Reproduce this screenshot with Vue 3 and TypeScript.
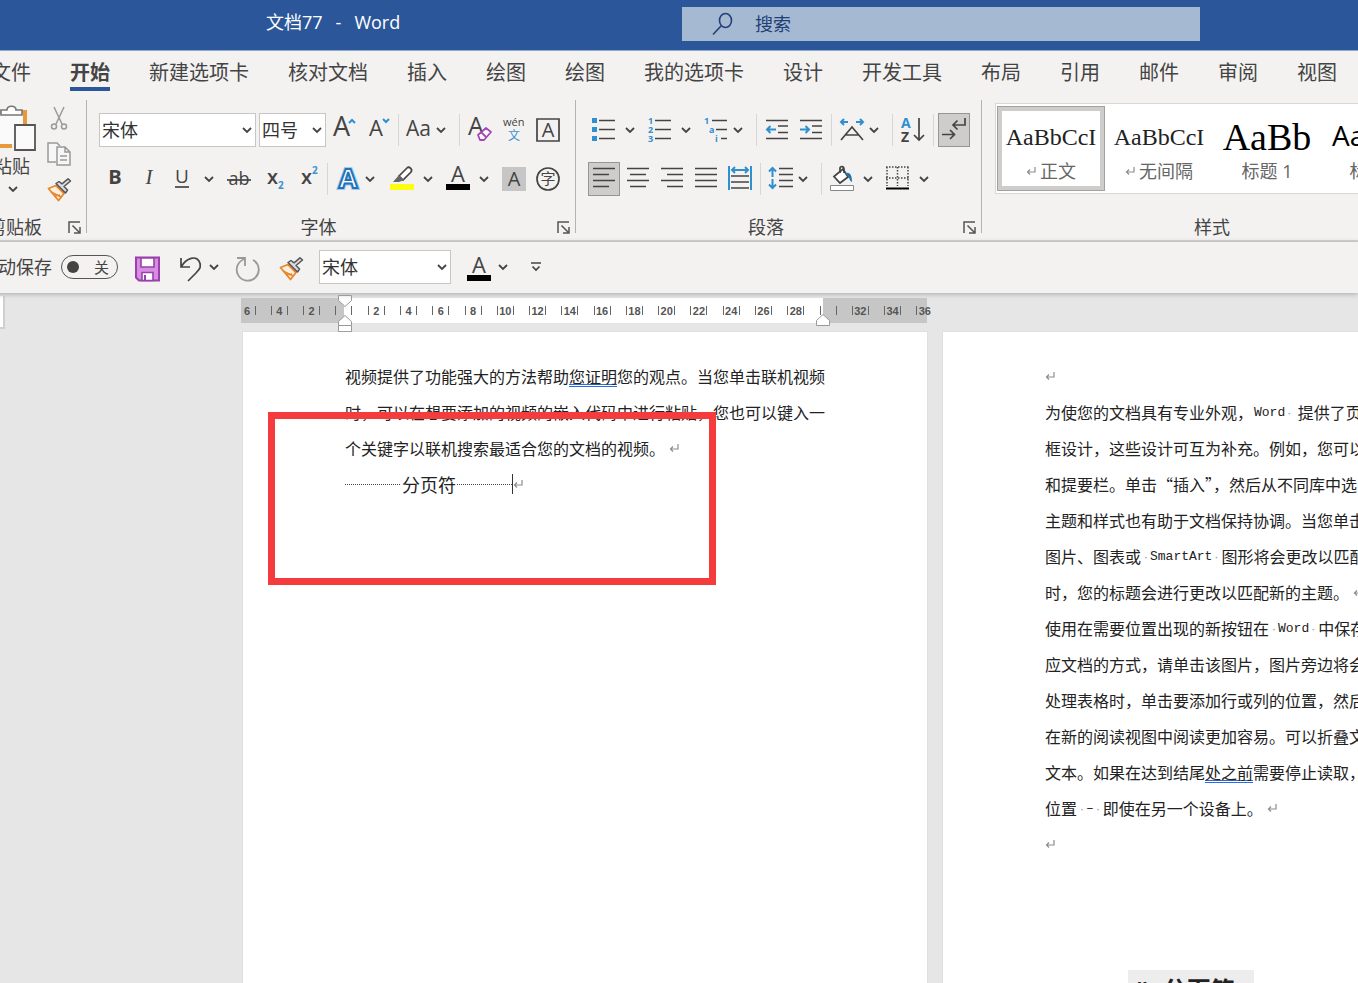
<script setup lang="ts">
import { h, ref } from 'vue'

const tabs: string[] = ['文件', '开始', '新建选项卡', '核对文档', '插入', '绘图', '绘图', '我的选项卡', '设计', '开发工具', '布局', '引用', '邮件', '审阅', '视图']
const activeTab = ref(1)

const fontName = ref('宋体')
const fontSize = ref('四号')
const query = ref('')
const autoSave = ref(false)

interface RulerMark { label: string }
const rulerMarks: RulerMark[] = Array.from({ length: 22 }, (_, i) => {
  const value = Math.abs(i * 2 - 6)
  return { label: value === 0 || value === 30 ? '' : String(value) }
})

interface StyleItem { sample: string; name: string; kind: string; mark: boolean }
const styleItems: StyleItem[] = [
  { sample: 'AaBbCcI', name: '正文', kind: 'body', mark: true },
  { sample: 'AaBbCcI', name: '无间隔', kind: 'body', mark: true },
  { sample: 'AaBb', name: '标题 1', kind: 'heading', mark: false },
  { sample: 'AaBbC', name: '标题 2', kind: 'sub', mark: false },
]

const Chevron = () =>
  h('svg', { width: 10, height: 10, viewBox: '0 0 10 10', fill: 'none', stroke: '#444', 'stroke-width': 1.8 }, [h('path', { d: 'M1 3l4 4 4-4' })])

const Launcher = () =>
  h('svg', { width: 13, height: 13, viewBox: '0 0 13 13', fill: 'none', stroke: '#555', 'stroke-width': 1.5 }, [
    h('path', { d: 'M1 12V1h11M4.500 4.500l7 7M12 6v6H6' }),
  ])

const Brush = () =>
  h('svg', { width: 24, height: 24, viewBox: '0 0 24 24', fill: 'none' }, [
    h('path', { d: 'M1.500 10.500L9 7.500l8 8-5.500 7z', fill: '#fdeede', stroke: '#e8862a', 'stroke-width': 1.8, 'stroke-linejoin': 'round' }),
    h('path', { d: 'M4 14l10 5M7 18l6-1', stroke: '#e8862a', 'stroke-width': 1.6 }),
    h('path', { d: 'M9 5.500l9.500 9.500 2-3-3.500-3.500L23.500 3 21 .800l-6 5L12 3.500z', fill: '#d9dde2', stroke: '#555', 'stroke-width': 1.5, 'stroke-linejoin': 'round' }),
  ])

const ReturnMark = () =>
  h('svg', { width: 10, height: 10, viewBox: '0 0 10 10', fill: 'none', stroke: '#8c8c8c', 'stroke-width': 1.2 }, [
    h('path', { d: 'M9 1v5H1.500M4 3.500L1.500 6 4 8.500' }),
  ])
</script>

<template>
  <div class="word" lang="zh-CN">
    <header class="title-bar">
      <h1 class="doc-title"><span>文档77</span><span>-</span><span>Word</span></h1>
      <label class="search">
        <svg width="24" height="24" viewBox="0 0 24 24" fill="none" stroke="#1f3f77" stroke-width="1.6"><ellipse cx="14.500" cy="8.500" rx="6" ry="7" /><path d="M10 14l-8 8.500" /></svg>
        <input v-model="query" type="text" placeholder="搜索" aria-label="搜索" />
      </label>
    </header>

    <nav class="tabs">
      <button v-for="(tab, i) in tabs" :key="i" type="button" :class="['tab', { active: i === activeTab }]" @click="activeTab = i">{{ tab }}</button>
    </nav>

    <div class="ribbon">
      <section class="group clipboard">
        <div class="clip-tools">
          <button type="button" class="paste">
            <svg width="40" height="48" viewBox="0 0 40 48" fill="none">
              <path d="M2 8h28v14M2 42h15" stroke="#e8993a" stroke-width="4" />
              <path d="M2 10h26v30H2z" fill="#fafafa" />
              <path d="M6 11V6h6c0-5 9-5 9 0h6v5z" fill="#fff" stroke="#777" stroke-width="1.600" />
              <path d="M20 21h20v25H20z" fill="#fafafa" stroke="#555" stroke-width="1.800" />
            </svg>
            <span>粘贴</span>
            <Chevron />
          </button>
          <div class="clip-side">
            <button type="button" class="tool" aria-label="剪切">
              <svg width="24" height="24" viewBox="0 0 24 24" fill="none" stroke="#999" stroke-width="1.500"><path d="M7 1l8 17M17 1L9 18" /><circle cx="7" cy="20.500" r="2.500" /><circle cx="17" cy="20.500" r="2.500" /></svg>
            </button>
            <button type="button" class="tool" aria-label="复制">
              <svg width="24" height="24" viewBox="0 0 24 24" fill="#f6f6f6" stroke="#999" stroke-width="1.500"><path d="M9 20H1V1h9l3 3" /><path d="M10 5h8l5 5v13H10zM18 5v5h5M13 14h7M13 18h7" /></svg>
            </button>
            <button type="button" class="tool" aria-label="格式刷"><Brush /></button>
          </div>
        </div>
        <footer class="group-foot"><span class="group-name">剪贴板</span><button type="button" class="tool launch" aria-label="剪贴板设置"><Launcher /></button></footer>
      </section>

      <section class="group font">
        <div class="tools">
          <div class="row font-row-1">
            <label class="combo combo-font"><select v-model="fontName" aria-label="字体"><option>宋体</option></select><Chevron /></label>
            <label class="combo combo-size"><select v-model="fontSize" aria-label="字号"><option>四号</option></select><Chevron /></label>
            <button type="button" class="tool" aria-label="增大字号"><svg width="24" height="24" viewBox="0 0 24 24"><text x="0" y="18" font-size="27" class="g">A</text><path d="M16 5l3-3 3 3" class="b2" /></svg></button>
            <button type="button" class="tool" aria-label="减小字号"><svg width="24" height="24" viewBox="0 0 24 24"><text x="1" y="18" font-size="22" class="g">A</text><path d="M15 1l3 3 3-3" class="b2" /></svg></button>
            <i class="rule"></i>
            <button type="button" class="tool" aria-label="更改大小写"><svg width="28" height="24" viewBox="0 0 28 24"><text x="0" y="18" font-size="21" class="g">Aa</text></svg></button>
            <button type="button" class="tool" aria-label="大小写选项"><Chevron /></button>
            <i class="rule"></i>
            <button type="button" class="tool" aria-label="清除格式"><svg width="24" height="24" viewBox="0 0 24 24"><text x="0" y="17" font-size="25" class="g">A</text><path d="M10 17l8-7 5 4-7 8h-4z" fill="#fff" stroke="#a347b5" stroke-width="1.800" stroke-linejoin="round" /><path d="M13 14l5 5" stroke="#a347b5" stroke-width="1.800" /></svg></button>
            <button type="button" class="tool" aria-label="拼音指南"><svg width="24" height="26" viewBox="0 0 24 26"><text x="0" y="9" font-size="11" class="g">wén</text><text x="5" y="23" font-size="12" fill="#3b93d0">文</text></svg></button>
            <button type="button" class="tool" aria-label="字符边框"><svg width="24" height="24" viewBox="0 0 24 24"><path d="M1 1h22v22H1z" class="k" /><text x="12" y="19" font-size="20" text-anchor="middle" class="g">A</text></svg></button>
          </div>
          <div class="row font-row-2">
            <button type="button" class="tool" aria-label="加粗"><svg width="24" height="24" viewBox="0 0 24 24"><text x="12" y="17" font-size="20" font-weight="700" text-anchor="middle" class="g">B</text></svg></button>
            <button type="button" class="tool" aria-label="倾斜"><svg width="24" height="24" viewBox="0 0 24 24"><text x="12" y="17" font-size="21" font-style="italic" text-anchor="middle" class="g serif">I</text></svg></button>
            <button type="button" class="tool" aria-label="下划线"><svg width="24" height="24" viewBox="0 0 24 24"><text x="12" y="16" font-size="19" text-anchor="middle" class="g">U</text><path d="M5 20h14" class="k" /></svg></button>
            <button type="button" class="tool" aria-label="下划线选项"><Chevron /></button>
            <button type="button" class="tool" aria-label="删除线"><svg width="24" height="24" viewBox="0 0 24 24"><text x="12" y="18" font-size="18" text-anchor="middle" class="g">ab</text><path d="M0 13h24" class="k" /></svg></button>
            <button type="button" class="tool" aria-label="下标"><svg width="24" height="24" viewBox="0 0 24 24"><text x="3" y="17" font-size="20" font-weight="600" class="g">x</text><text x="14" y="22" font-size="10" font-weight="700" fill="#3b93d0">2</text></svg></button>
            <button type="button" class="tool" aria-label="上标"><svg width="24" height="24" viewBox="0 0 24 24"><text x="3" y="17" font-size="20" font-weight="600" class="g">x</text><text x="14" y="7" font-size="10" font-weight="700" fill="#3b93d0">2</text></svg></button>
            <i class="rule"></i>
            <button type="button" class="tool" aria-label="文本效果"><svg width="24" height="24" viewBox="0 0 24 24"><g font-size="27" font-weight="700" text-anchor="middle"><text x="12" y="21" fill="#9ccbee" stroke="#9ccbee" stroke-width="4">A</text><text x="12" y="21" fill="#fff" stroke="#2272b8" stroke-width="2">A</text></g></svg></button>
            <button type="button" class="tool" aria-label="文本效果选项"><Chevron /></button>
            <button type="button" class="tool" aria-label="突出显示"><svg width="24" height="24" viewBox="0 0 24 24"><path d="M0 17h24v6H0z" fill="#fdfd12" /><path d="M9 9l8-8c2-2 6 1 4 4l-8 8z" fill="#fff" class="k" /><path d="M9 8l5 5-5 2H3z" fill="#666" /></svg></button>
            <button type="button" class="tool" aria-label="突出显示颜色"><Chevron /></button>
            <button type="button" class="tool" aria-label="字体颜色"><svg width="24" height="24" viewBox="0 0 24 24"><text x="12" y="15" font-size="22" text-anchor="middle" class="g">A</text><path d="M0 17h24v6H0z" /></svg></button>
            <button type="button" class="tool" aria-label="字体颜色选项"><Chevron /></button>
            <button type="button" class="tool" aria-label="字符底纹"><svg width="24" height="24" viewBox="0 0 24 24"><path d="M0 0h24v24H0z" fill="#c6c6c6" /><text x="12" y="19" font-size="20" text-anchor="middle" class="g">A</text></svg></button>
            <button type="button" class="tool" aria-label="带圈字符"><svg width="24" height="24" viewBox="0 0 24 24"><circle cx="12" cy="12" r="11" class="k" /><text x="12" y="17" font-size="15" text-anchor="middle" class="g">字</text></svg></button>
          </div>
        </div>
        <footer class="group-foot"><span class="group-name">字体</span><button type="button" class="tool launch" aria-label="字体设置"><Launcher /></button></footer>
      </section>

      <section class="group para">
        <div class="tools">
          <div class="row para-row-1">
            <button type="button" class="tool" aria-label="项目符号"><svg width="24" height="24" viewBox="0 0 24 24"><path d="M0 0h5v5H0zM0 9h5v5H0zM0 18h5v5H0z" fill="#2f8fcf" /><path d="M7 2.500h16M7 11.500h16M7 20.500h16" class="k" /></svg></button>
            <button type="button" class="tool" aria-label="项目符号选项"><Chevron /></button>
            <button type="button" class="tool" aria-label="编号"><svg width="24" height="24" viewBox="0 0 24 24"><g font-size="9" font-weight="700" fill="#2f8fcf"><text x="0" y="6">1</text><text x="0" y="15">2</text><text x="0" y="24">3</text></g><path d="M7 2.500h16M7 11.500h16M7 20.500h16" class="k" /></svg></button>
            <button type="button" class="tool" aria-label="编号选项"><Chevron /></button>
            <button type="button" class="tool" aria-label="多级列表"><svg width="24" height="24" viewBox="0 0 24 24"><g font-size="9" font-weight="700" fill="#2f8fcf"><text x="0" y="6">1</text><text x="5" y="15">a</text><text x="11" y="24">i</text></g><path d="M8 2.500h15M12 11.500h11M17 20.500h6" class="k" /></svg></button>
            <button type="button" class="tool" aria-label="多级列表选项"><Chevron /></button>
            <i class="rule"></i>
            <button type="button" class="tool" aria-label="减少缩进"><svg width="24" height="24" viewBox="0 0 24 24"><path d="M1 2.500h22M13 8h10M13 14.500h10M1 20.500h22" class="k" /><path d="M11 11.500H2M5.500 8L2 11.500 5.500 15" class="b2" /></svg></button>
            <button type="button" class="tool" aria-label="增加缩进"><svg width="24" height="24" viewBox="0 0 24 24"><path d="M1 2.500h22M13 8h10M13 14.500h10M1 20.500h22" class="k" /><path d="M1 11.500h9M6.500 8l3.500 3.500L6.500 15" class="b2" /></svg></button>
            <i class="rule"></i>
            <button type="button" class="tool" aria-label="中文版式"><svg width="24" height="24" viewBox="0 0 24 24"><path d="M8 4H1M4 1L1 4l3 3M16 4h7M20 1l3 3-3 3" class="b2" /><path d="M1 22L12 9l11 13M6 17h12" class="k" /></svg></button>
            <button type="button" class="tool" aria-label="中文版式选项"><Chevron /></button>
            <i class="rule"></i>
            <button type="button" class="tool" aria-label="排序"><svg width="25" height="24" viewBox="0 0 25 24"><text x="0" y="10" font-size="14" font-weight="700" fill="#2f8fcf">A</text><text x="0" y="24" font-size="14" font-weight="700" class="g">Z</text><path d="M18 0v22M13 17l5 5 5-5" class="k" /></svg></button>
            <i class="rule"></i>
            <button type="button" class="tool pressed" aria-label="显示编辑标记"><svg width="30" height="32" viewBox="0 0 30 32"><path d="M26 4v7H15M18.500 6.500L14 11l4.500 4.500M3 20.500h12M11 16l4.500 4.500L11 25" class="k" /></svg></button>
          </div>
          <div class="row para-row-2">
            <button type="button" class="tool pressed" aria-label="左对齐"><svg width="24" height="24" viewBox="0 0 24 24"><path d="M1 1.500h22M1 7.500h16M1 13.500h22M1 19.500h16" class="k" /></svg></button>
            <button type="button" class="tool" aria-label="居中"><svg width="24" height="24" viewBox="0 0 24 24"><path d="M1 1.500h22M4 7.500h16M1 13.500h22M4 19.500h16" class="k" /></svg></button>
            <button type="button" class="tool" aria-label="右对齐"><svg width="24" height="24" viewBox="0 0 24 24"><path d="M1 1.500h22M7 7.500h16M1 13.500h22M7 19.500h16" class="k" /></svg></button>
            <button type="button" class="tool" aria-label="两端对齐"><svg width="24" height="24" viewBox="0 0 24 24"><path d="M1 1.500h22M1 7.500h22M1 13.500h22M1 19.500h22" class="k" /></svg></button>
            <button type="button" class="tool" aria-label="分散对齐"><svg width="24" height="24" viewBox="0 0 24 24"><path d="M1 -1v24M23 -1v24M4 3h16M7 0L4 3l3 3M17 0l3 3-3 3" class="b2" /><path d="M3 9h18M3 15h18M3 21h18" class="k" /></svg></button>
            <i class="rule"></i>
            <button type="button" class="tool" aria-label="行距"><svg width="26" height="24" viewBox="0 0 26 24"><path d="M4.500 1v9M1 4.500L4.500 1 8 4.500M4.500 12v9M1 17.500L4.500 21 8 17.500" class="b2" /><path d="M11 1.500h14M11 7.500h14M11 13.500h14M11 19.500h14" class="k" /></svg></button>
            <button type="button" class="tool" aria-label="行距选项"><Chevron /></button>
            <i class="rule"></i>
            <button type="button" class="tool" aria-label="底纹"><svg width="24" height="24" viewBox="0 0 24 24"><path d="M4 9.500L13 2l5 8-8 6z" fill="#fff" stroke="#444" stroke-width="1.700" /><path d="M10 6V1c0-2 4-2 4 1v4" class="k" /><path d="M15 6c5-1 7 2 7 9-3-1-2-5-5-6z" fill="#2272a8" /><path d="M.500 18.500h23v5H.500z" fill="#fff" stroke="#888" /></svg></button>
            <button type="button" class="tool" aria-label="底纹颜色"><Chevron /></button>
            <button type="button" class="tool" aria-label="边框"><svg width="25" height="24" viewBox="0 0 25 24"><path d="M1 0h23M1 11h23M2 0v19M12.500 0v19M23 0v19" fill="none" stroke="#444" stroke-width="1.500" stroke-dasharray="1.500 1.500" /><path d="M1 21.500h23" stroke="#000" stroke-width="2" /></svg></button>
            <button type="button" class="tool" aria-label="边框选项"><Chevron /></button>
          </div>
        </div>
        <footer class="group-foot"><span class="group-name">段落</span><button type="button" class="tool launch" aria-label="段落设置"><Launcher /></button></footer>
      </section>

      <section class="group styles">
        <div class="gallery">
          <button v-for="(s, i) in styleItems" :key="i" type="button" :class="['style-item', { chosen: i === 0 }]">
            <span :class="['sample', s.kind]">{{ s.sample }}</span>
            <span class="style-name"><ReturnMark v-if="s.mark" />{{ s.name }}</span>
          </button>
        </div>
        <footer class="group-foot"><span class="group-name">样式</span></footer>
      </section>
    </div>

    <div class="quick-bar">
      <span class="auto-label" id="auto-save">自动保存</span>
      <button type="button" role="switch" :aria-checked="autoSave" aria-labelledby="auto-save" class="toggle" @click="autoSave = !autoSave"><i class="dot"></i><span>{{ autoSave ? '开' : '关' }}</span></button>
      <button type="button" class="tool low" aria-label="保存"><svg width="27" height="26" viewBox="0 0 27 26"><path d="M2 1.500h23v23H5l-3-3z" fill="#d78ee0" stroke="#9a3fae" stroke-width="2" /><path d="M7 2h13v9H7zM8 16.500h11v8H8z" fill="#fff" stroke="#9a3fae" stroke-width="1.600" /><path d="M11 19v5" stroke="#9a3fae" stroke-width="2" /></svg></button>
      <button type="button" class="tool low" aria-label="撤消"><svg width="24" height="26" viewBox="0 0 24 26"><path d="M2 2v9h9M2 11C8 1 17 0 20 5c3 5 1 8-3 12l-8 8" class="k" /></svg></button>
      <button type="button" class="tool" aria-label="撤消选项"><Chevron /></button>
      <button type="button" class="tool low" aria-label="重做"><svg width="26" height="26" viewBox="0 0 26 26" fill="none" stroke="#999" stroke-width="1.800"><path d="M2 2h8v8M10 3A11 11 0 1 0 18 4" /></svg></button>
      <button type="button" class="tool low" aria-label="格式刷"><Brush /></button>
      <label class="combo combo-quick"><select v-model="fontName" aria-label="快速字体"><option>宋体</option></select><Chevron /></label>
      <button type="button" class="tool low" aria-label="字体颜色"><svg width="24" height="26" viewBox="0 0 24 26"><text x="12" y="17" font-size="22" text-anchor="middle" class="g">A</text><path d="M0 19h24v6H0z" /></svg></button>
      <button type="button" class="tool" aria-label="字体颜色选项"><Chevron /></button>
      <button type="button" class="tool" aria-label="自定义快速访问工具栏"><svg width="12" height="12" viewBox="0 0 12 12" class="k"><path d="M1 2h10M2.500 5.500L6 9l3.500-3.500" /></svg></button>
    </div>

    <main class="workspace">
      <div class="tab-selector"></div>
      <div class="ruler">
        <div class="ruler-marks">
          <div v-for="(m, i) in rulerMarks" :key="i" class="mark"><i></i><span>{{ m.label }}</span><i></i></div>
        </div>
        <svg class="indent-left" width="14" height="38" viewBox="0 0 14 38" fill="#fff" stroke="#999"><path d="M.500 .500h13v5L7 11.500.500 5.500zM7 20.500l6.500 6v4H.500v-4zM.500 30.500h13v6H.500z" /></svg>
        <svg class="indent-right" width="14" height="12" viewBox="0 0 14 12" fill="#fff" stroke="#999"><path d="M7 .500l6.500 6v5H.500v-5z" /></svg>
      </div>

      <div class="pages">
        <article class="page">
          <p>视频提供了功能强大的方法帮助<u>您证明</u>您的观点。当您单击联机视频</p>
          <p>时，可以在想要添加的视频的嵌入代码中进行粘贴，您也可以键入一</p>
          <p>个关键字以联机搜索最适合您的文档的视频。<ReturnMark class="ret" /></p>
          <p class="break"><i class="leader"></i><span>分页符</span><i class="leader"></i><i class="caret"></i><ReturnMark /></p>
          <div class="highlight"></div>
        </article>
        <article class="page">
          <p><ReturnMark /></p>
          <p>为使您的文档具有专业外观，<span class="latin">Word<b>·</b></span> 提供了页</p>
          <p>框设计，这些设计可互为补充。例如，您可以</p>
          <p>和提要栏。单击“插入”，然后从不同库中选</p>
          <p>主题和样式也有助于文档保持协调。当您单击</p>
          <p>图片、图表或<span class="latin"><b>·</b>SmartArt<b>·</b></span>图形将会更改以匹配</p>
          <p>时，您的标题会进行更改以匹配新的主题。<ReturnMark class="ret" /></p>
          <p>使用在需要位置出现的新按钮在<span class="latin"><b>·</b>Word<b>·</b></span>中保存</p>
          <p>应文档的方式，请单击该图片，图片旁边将会</p>
          <p>处理表格时，单击要添加行或列的位置，然后</p>
          <p>在新的阅读视图中阅读更加容易。可以折叠文</p>
          <p>文本。如果在达到结尾<u>处之前</u>需要停止读取，</p>
          <p>位置<span class="latin"><b>·</b>–<b>·</b></span>即使在另一个设备上。<ReturnMark class="ret" /></p>
          <p><ReturnMark /></p>
        </article>
      </div>
      <div class="caption"><span>“</span><span>分页符</span></div>
    </main>
  </div>
</template>

<style>
html,
body {
  margin: 0;
  overflow: hidden;
}
</style>

<style scoped>
.word {
  display: flex;
  flex-direction: column;
  height: 100vh;
  overflow: hidden;
  background: #f3f2f1;
  color: #444;
  font-family: "Open Sans", "Noto Sans CJK SC", sans-serif;
  font-size: 18px;
  line-height: 24px;
}
button,
select,
input {
  margin: 0;
  padding: 0;
  border: 0;
  background: none;
  color: inherit;
  font: inherit;
}
svg {
  display: block;
  flex: none;
  overflow: visible;
}
.g {
  fill: #444;
}
.serif {
  font-family: "Liberation Serif", serif;
}
.k {
  stroke: #444;
  stroke-width: 1.7;
}
.k:not([fill]) {
  fill: none;
}
.b2 {
  fill: none;
  stroke: #2f8fcf;
  stroke-width: 2;
}

.title-bar {
  flex: none;
  display: grid;
  grid-template-columns: 266px 1fr 518px 158px;
  height: 50px;
  border-bottom: 1px solid #8fa9cf;
  background: #2b579a;
}
.doc-title {
  grid-column: 2;
  display: flex;
  gap: 13px;
  margin: 10px 0 0;
  color: #fff;
  font-size: 18px;
  font-weight: 400;
  white-space: nowrap;
}
.search {
  grid-column: 3;
  display: flex;
  align-items: center;
  gap: 20px;
  height: 34px;
  margin-top: 7px;
  padding-left: 29px;
  box-sizing: border-box;
  background: #a6b9d3;
  color: #1f3f77;
}
.search input {
  flex: 1;
  outline: 0;
}
.search input::placeholder {
  color: #1f3f77;
  opacity: 1;
}

.tabs {
  flex: none;
  display: flex;
  gap: 39px;
  height: 47px;
  margin-left: -9px;
}
.tab {
  flex: none;
  align-self: flex-start;
  height: 32px;
  margin-top: 8px;
  border-bottom: 4px solid transparent;
  font-size: 20px;
  line-height: 28px;
  white-space: nowrap;
}
.tab.active {
  border-color: #2b579a;
  font-weight: 700;
}

.ribbon {
  flex: none;
  display: flex;
  height: 142px;
  border-bottom: 2px solid #d2d0ce;
}
.group {
  flex: none;
  position: relative;
  display: flex;
  flex-direction: column;
  justify-content: space-between;
  box-sizing: border-box;
}
.group::after {
  content: "";
  position: absolute;
  top: 2px;
  right: 0;
  bottom: 7px;
  width: 1px;
  background: #b5b3b1;
}
.clipboard {
  width: 87px;
}
.font {
  width: 489px;
}
.para {
  width: 406px;
}
.styles {
  width: 460px;
}
.group-foot {
  display: flex;
  align-items: center;
  height: 26px;
}
.group-name {
  flex: 1;
  text-align: center;
  white-space: nowrap;
}
.launch {
  width: 19px;
  height: 26px;
  margin-left: 7px;
}
.clipboard .group-name {
  margin-left: -12px;
  text-align: left;
}
.clip-tools {
  display: flex;
}
.paste {
  display: flex;
  flex-direction: column;
  align-items: flex-start;
  width: 52px;
  margin: 6px 0 0 -5px;
}
.paste span {
  margin: 2px 0 6px -1px;
  white-space: nowrap;
}
.paste span + svg {
  margin-left: 13px;
}
.clip-side {
  display: flex;
  flex-direction: column;
  gap: 12px;
  margin-top: 8px;
}
.tools {
  display: flex;
  flex-direction: column;
  gap: 15px;
  padding: 15px 0 0 12px;
}
.row {
  display: grid;
  align-items: center;
  height: 34px;
}
.font-row-1 {
  grid-template-columns: 160px 74px 35px 30px 8px 30px 23px 9px 35px 33px 24px;
}
.font-row-2 {
  grid-template-columns: 34px 33px 34px 23px 37px 34px 29px 9px 29px 25px 33px 23px 33px 23px 34px 24px;
  padding-left: 4px;
}
.para-row-1 {
  grid-template-columns: 33px 23px 33px 23px 29px 23px 9px 34px 32px 9px 29px 23px 9px 32px 5px 32px;
  padding-left: 4px;
}
.para-row-2 {
  grid-template-columns: 38px 34px 34px 34px 32px 8px 30px 23px 9px 33px 22px 34px 10px;
}
.tool {
  display: flex;
  align-items: center;
  justify-content: flex-start;
}
.low {
  margin-top: 4px;
}
.pressed {
  justify-content: center;
  box-sizing: border-box;
  width: 32px;
  height: 34px;
  border: 1px solid #979593;
  background: #cfcdcb;
}
.rule {
  width: 1px;
  height: 32px;
  background: #d8d6d4;
}
.combo {
  display: grid;
  align-items: center;
  box-sizing: border-box;
  height: 34px;
  border: 1px solid #c8c6c4;
  background: #fff;
  color: #333;
}
.combo > * {
  grid-area: 1 / 1;
}
.combo > svg {
  justify-self: end;
  margin-right: 3px;
  pointer-events: none;
}
.combo select {
  width: 100%;
  height: 32px;
  padding-left: 2px;
  appearance: none;
}
.combo-font {
  width: 157px;
}
.combo-size {
  width: 67px;
}
.combo-quick {
  width: 132px;
}

.gallery {
  display: flex;
  box-sizing: border-box;
  height: 91px;
  margin: 5px 0 0 13px;
  padding: 2px 1px;
  border: 1px solid #dad8d6;
  background: #fff;
}
.style-item {
  flex: none;
  display: flex;
  flex-direction: column;
  align-items: center;
  box-sizing: border-box;
  width: 108px;
  height: 85px;
  border: 1px solid transparent;
}
.style-item.chosen {
  border-color: #a3a1a0;
  box-shadow: inset 0 0 0 4px #cfcdcb;
}
.sample {
  height: 52px;
  color: #222;
  line-height: 60px;
  white-space: nowrap;
}
.sample.body {
  font-family: "Liberation Serif", serif;
  font-size: 24px;
}
.sample.heading {
  color: #000;
  font-family: "Liberation Serif", serif;
  font-size: 38px;
}
.sample.sub {
  color: #000;
  font-size: 28px;
  line-height: 56px;
}
.style-name {
  display: flex;
  align-items: center;
  gap: 4px;
  color: #666;
  white-space: nowrap;
}

.quick-bar {
  flex: none;
  position: relative;
  z-index: 1;
  display: grid;
  grid-template-columns: 81px 73px 45px 30px 26px 44px 40px 148px 31px 32px 12px;
  align-items: center;
  box-sizing: border-box;
  height: 51px;
  margin-left: -20px;
  padding-bottom: 2px;
  background: #f3f2f1;
  box-shadow: 0 1px 5px #a8a8a8;
}
.auto-label {
  white-space: nowrap;
}
.toggle {
  display: flex;
  align-items: center;
  justify-content: space-between;
  box-sizing: border-box;
  width: 57px;
  height: 24px;
  padding: 0 8px 0 5px;
  border: 1px solid #555;
  border-radius: 12px;
  font-size: 15px;
}
.dot {
  width: 12px;
  height: 12px;
  border-radius: 50%;
  background: #444;
}

.workspace {
  flex: 1;
  position: relative;
  display: flex;
  flex-direction: column;
  min-height: 0;
  padding-top: 5px;
  overflow: hidden;
  background: #e6e6e6;
}
.tab-selector {
  position: absolute;
  top: 3px;
  left: 0;
  width: 3px;
  height: 31px;
  border-right: 2px solid #d0d0d0;
  border-bottom: 2px solid #d0d0d0;
  background: #fff;
}
.ruler {
  flex: none;
  position: relative;
  width: 686px;
  height: 25px;
  margin-left: 241px;
  background: linear-gradient(to right, #c6c6c6 103px, #fff 103px 582px, #c6c6c6 582px);
}
.ruler-marks {
  display: grid;
  grid-template-columns: repeat(22, 1fr);
  width: 710px;
  margin-left: -10px;
  clip-path: inset(0 10px 0 10px);
}
.mark {
  display: flex;
  align-items: center;
  justify-content: center;
  height: 25px;
  color: #555;
  font-family: "Liberation Sans", sans-serif;
  font-size: 11px;
  font-weight: 700;
}
.mark i {
  width: 1px;
  height: 9px;
  background: #666;
}
.mark span {
  width: 15px;
  text-align: center;
}
.indent-left {
  position: absolute;
  top: -3px;
  left: 97px;
}
.indent-right {
  position: absolute;
  top: 16px;
  left: 575px;
}
.pages {
  flex: 1;
  display: flex;
  gap: 16px;
  min-height: 0;
  margin: 9px 0 0 243px;
}
.page {
  flex: none;
  position: relative;
  box-sizing: border-box;
  width: 684px;
  padding: 26px 102px 0;
  background: #fff;
  box-shadow: 0 0 1px #bbb;
  color: #222;
  font-family: "Noto Sans CJK SC", sans-serif;
  font-size: 16px;
}
.page p {
  display: flex;
  align-items: center;
  height: 36px;
  margin: 0;
  line-height: 36px;
  white-space: pre;
}
.page u {
  text-decoration-line: underline;
  text-decoration-style: double;
  text-decoration-color: #2f6be0;
  text-decoration-thickness: 1px;
  text-underline-offset: 1px;
  text-decoration-skip-ink: none;
}
.ret {
  margin-left: 4px;
}
.latin {
  display: flex;
  margin: 0 1px;
  padding-top: 2px;
  font-family: "Liberation Mono", monospace;
  font-size: 13px;
}
.latin b {
  width: 8px;
  color: #999;
  font-family: "Liberation Sans", sans-serif;
  font-weight: 400;
  text-align: center;
}
.page .break {
  font-size: 18px;
}
.leader {
  flex: none;
  width: 55px;
  border-top: 1px dotted #444;
}
.break span {
  margin: 0 1px 0 2px;
}
.caret {
  width: 1px;
  height: 20px;
  background: #333;
}
.highlight {
  position: absolute;
  top: 80px;
  left: 25px;
  box-sizing: border-box;
  width: 448px;
  height: 173px;
  border: 7px solid #f53b3b;
}
.caption {
  position: absolute;
  top: 677px;
  left: 1128px;
  display: flex;
  gap: 16px;
  box-sizing: border-box;
  width: 126px;
  height: 42px;
  padding-left: 8px;
  background: #ededed;
  color: #222;
  font-size: 24px;
  font-weight: 700;
  line-height: 40px;
}
</style>
